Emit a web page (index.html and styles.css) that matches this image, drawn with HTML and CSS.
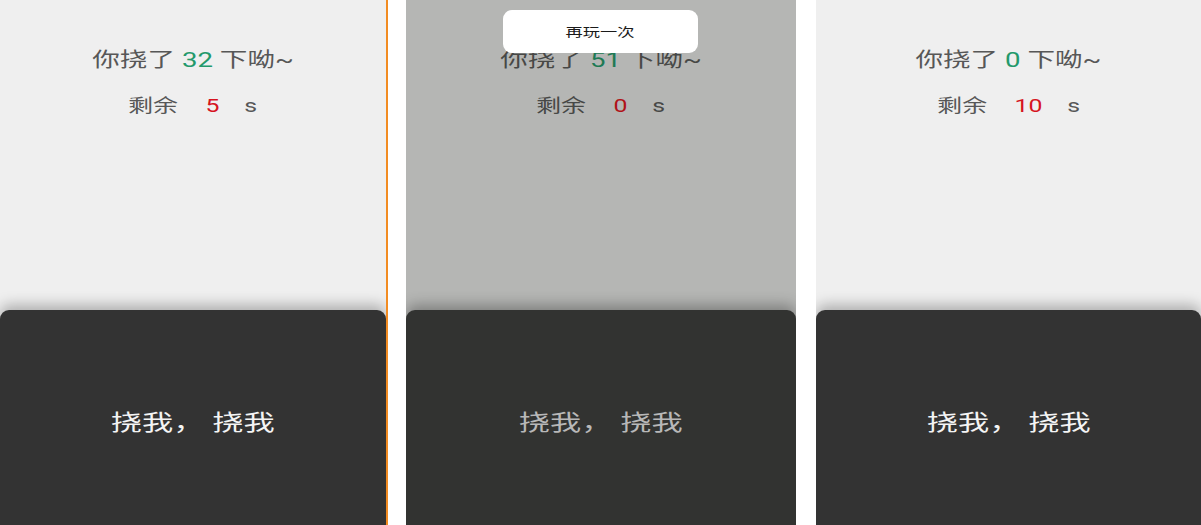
FILE: index.html
```html
<!DOCTYPE html>
<html lang="zh">
<head>
<meta charset="utf-8">
<title>挠我</title>
<link rel="stylesheet" href="styles.css">
</head>
<body>
<div class="strip">
  <section class="screen screen-active">
    <div class="top">
      <p class="line count"><span class="wide">你挠了 <span class="num green">32</span> 下呦~</span></p>
      <p class="line remain"><span class="wide">剩余<span class="num red gapped">5</span>s</span></p>
    </div>
    <div class="pad"><span class="wide pad-text">挠我， 挠我</span></div>
  </section>

  <section class="screen screen-dim">
    <div class="top">
      <p class="line count"><span class="wide">你挠了 <span class="num green">51</span> 下呦~</span></p>
      <p class="line remain"><span class="wide">剩余<span class="num red gapped">0</span>s</span></p>
    </div>
    <div class="pad"><span class="wide pad-text">挠我， 挠我</span></div>
    <button class="replay"><span class="wide">再玩一次</span></button>
  </section>

  <section class="screen">
    <div class="top">
      <p class="line count"><span class="wide">你挠了 <span class="num green">0</span> 下呦~</span></p>
      <p class="line remain"><span class="wide">剩余<span class="num red gapped">10</span>s</span></p>
    </div>
    <div class="pad"><span class="wide pad-text">挠我， 挠我</span></div>
  </section>
</div>
</body>
</html>
```
FILE: styles.css
```css
* { box-sizing: border-box; }

html, body {
  margin: 0;
  padding: 0;
  background: #ffffff;
  height: 525px;
  overflow: hidden;
}

body {
  font-family: "Roboto", "Noto Sans CJK SC", sans-serif;
}

.strip {
  display: flex;
  height: 525px;
}

.screen {
  position: relative;
  display: flex;
  flex-direction: column;
  background: #efefef;
  height: 525px;
  overflow: hidden;
}

.screen:nth-child(1) {
  width: 388px;
  border-right: 2px solid #f28c22;
}

.screen:nth-child(2) {
  width: 390px;
  margin-left: 18px;
}

.screen:nth-child(3) {
  flex: 1;
  margin-left: 20px;
}

.top {
  height: 310px;
  padding-top: 46px;
  display: flex;
  flex-direction: column;
  align-items: center;
}

.line {
  margin: 0;
  text-align: center;
  color: #575757;
}

.wide {
  display: inline-block;
  transform: scaleX(1.38);
  transform-origin: center;
  white-space: pre;
}

.count {
  font-size: 20px;
  line-height: 28px;
}

.remain {
  font-size: 18px;
  line-height: 24px;
  margin-top: 20px;
}

.num.green { color: #23996b; }
.num.red { color: #d6141f; }

.gapped {
  margin: 0 18px 0 20px;
}

.pad {
  flex: 1;
  background: #333333;
  border-radius: 9px 9px 0 0;
  box-shadow: 0 -5px 14px rgba(0, 0, 0, 0.28);
  display: flex;
  align-items: center;
  justify-content: center;
  padding-top: 4px;
  position: relative;
}

.pad-text {
  color: #f4f4f4;
  font-size: 22px;
  transform: scaleX(1.42);
}

/* dimmed (dialog open) variant */
.screen-dim {
  background: #b5b6b4;
}

.screen-dim .line { color: #474846; }
.screen-dim .num.green { color: #1e7a55; }
.screen-dim .num.red { color: #b01219; }
.screen-dim .pad { background: #323331; box-shadow: 0 -5px 14px rgba(0, 0, 0, 0.3); }
.screen-dim .pad-text { color: #b8b8b8; }

.replay {
  position: absolute;
  top: 10px;
  left: 97px;
  width: 195px;
  height: 43px;
  border: none;
  border-radius: 9px;
  background: #ffffff;
  color: #1a1a1a;
  font-family: "Roboto", "Noto Sans CJK SC", sans-serif;
  font-size: 12.5px;
  padding: 0;
  display: flex;
  align-items: center;
  justify-content: center;
}
```
